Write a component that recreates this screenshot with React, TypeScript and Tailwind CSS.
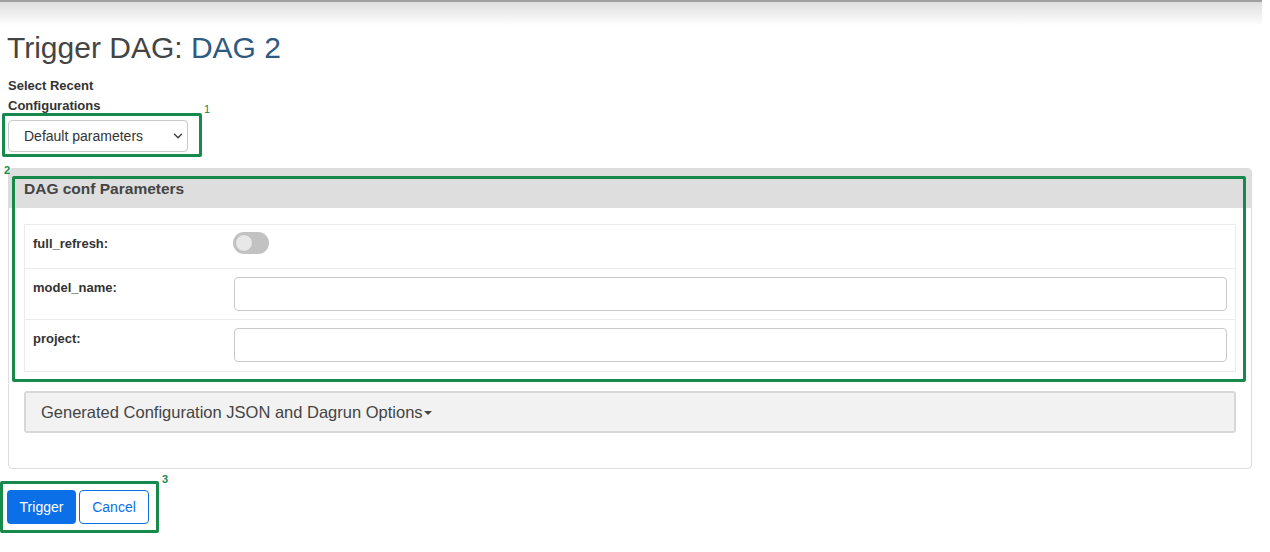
import { ChevronDown } from "lucide-react";

const rows = [
  { label: "full_refresh:", kind: "toggle", h: "h-[43px]" },
  { label: "model_name:", kind: "input", h: "h-[51px]" },
  { label: "project:", kind: "input", h: "h-[52px]" },
];

function Toggle() {
  return (
    <div className="mt-[7px] -ml-px flex h-[22px] w-[36px] items-center rounded-full bg-[#c2c2c2] px-[2px]">
      <div className="h-[18px] w-[18px] rounded-full border border-[#bdbdbd] bg-[#e8e8e8]" />
    </div>
  );
}

export default function App() {
  return (
    <div className="relative min-h-[552px] bg-white font-['Liberation_Sans',Arial,sans-serif] text-[#333]">
      {/* navbar shadow */}
      <div className="mr-[8px] h-[26px] border-t-2 border-[#a0a0a0] bg-gradient-to-b from-[#dedede] to-white" />

      <div className="pl-2 pr-[18px]">
        <h1 className="-ml-px mt-[4px] text-[30px] leading-[36px] text-[#444]">
          Trigger DAG: <span className="text-[#2f5a82]">DAG 2</span>
        </h1>

        <div className="mt-[10px] w-[110px] text-[13px] font-bold leading-5 text-[#333]">
          Select Recent Configurations
        </div>

        <div className="mt-[4px] flex h-[32px] w-[180px] items-center justify-between rounded-[4px] border border-[#c9c9c9] pl-[15px] pr-[2px] text-[14px] text-[#333]">
          <span>Default parameters</span>
          <ChevronDown size={14} strokeWidth={2.5} className="text-[#444]" />
        </div>

        <div className="mt-[16px] overflow-hidden rounded-[4px] border border-[#dcdcdc]">
          <div className="flex h-[39px] items-center bg-[#dedede] pl-[15px] text-[15.5px] font-bold text-[#444]">
            DAG conf Parameters
          </div>
          <div className="px-[15px] pb-[35px] pt-[16px]">
            <div className="border border-[#ececec]">
              {rows.map((r, i) => (
                <div
                  key={r.label}
                  className={`flex ${r.h} ${i > 0 ? "border-t border-[#ececec]" : ""}`}
                >
                  <div className="w-[209px] shrink-0 pl-[8px] pt-[9px] text-[13px] font-bold leading-5 text-[#333]">
                    {r.label}
                  </div>
                  <div className="flex-1 pr-[8px]">
                    {r.kind === "toggle" ? (
                      <Toggle />
                    ) : (
                      <div className="mt-[8px] h-[34px] rounded-[4px] border border-[#c9c9c9] bg-white" />
                    )}
                  </div>
                </div>
              ))}
            </div>

            <div className="mt-[19px] flex h-[42px] items-center rounded-[3px] border-2 border-[#d8d8d8] bg-[#f2f2f2] pl-[15px] text-[16.5px] text-[#444]">
              Generated Configuration JSON and Dagrun Options
              <span className="ml-[1px] mt-[2px] inline-block border-x-[4px] border-t-[4px] border-x-transparent border-t-[#444]" />
            </div>
          </div>
        </div>

        <div className="mt-[21px] flex gap-[3px]">
          <button className="-ml-px h-[34px] w-[69px] rounded-[4px] bg-[#0b6fe8] text-[14px] text-white">
            Trigger
          </button>
          <button className="h-[34px] w-[70px] rounded-[4px] border border-[#0b6fe8] bg-white text-[14px] text-[#0b6fe8]">
            Cancel
          </button>
        </div>
      </div>

      {/* annotation overlays */}
      <div className="pointer-events-none absolute left-[2px] top-[113px] h-[44px] w-[200px] rounded-[2px] border-[3px] border-[#17894a]" />
      <div className="absolute left-[204px] top-[101px] text-[11px] leading-4 text-[#17894a]">1</div>

      <div className="pointer-events-none absolute left-[12px] top-[176px] h-[206px] w-[1234px] rounded-[2px] border-[3px] border-[#17894a]" />
      <div className="absolute left-[4px] top-[162px] text-[11px] font-bold leading-4 text-[#17894a]">2</div>

      <div className="pointer-events-none absolute left-0 top-[481px] h-[52px] w-[159px] rounded-[2px] border-[3px] border-[#17894a]" />
      <div className="absolute left-[162px] top-[471px] text-[11px] font-bold leading-4 text-[#17894a]">3</div>
    </div>
  );
}
